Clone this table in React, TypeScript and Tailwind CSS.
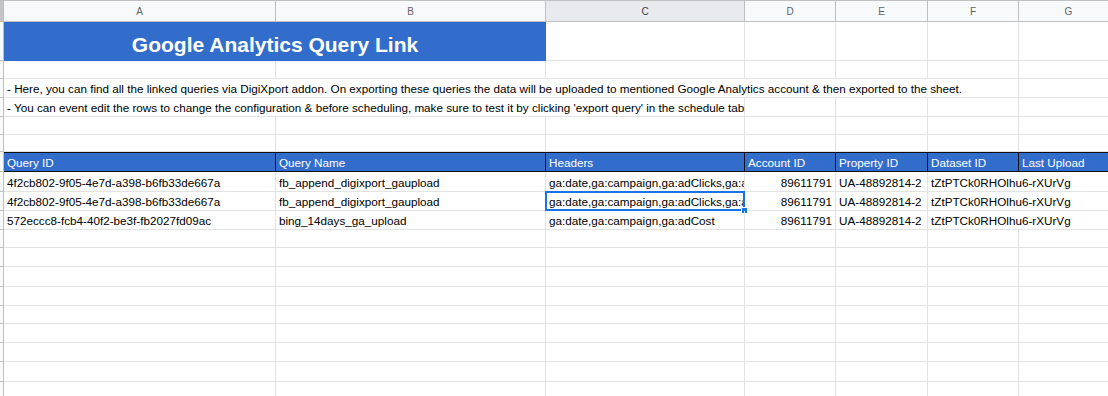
import React from "react";

const GRID = "border-[#e2e3e3]";

type CellProps = {
    w?: string;
    className?: string;
    children?: React.ReactNode;
};

function Cell({ w = "", className = "overflow-hidden", children }: CellProps) {
    return (
        <div className={`${w} shrink-0 h-full border-r border-b ${GRID} flex items-end px-[3px] pb-[1px] leading-[14px] whitespace-nowrap ${className}`}>
            {children}
        </div>
    );
}

function Row({ h, children }: { h: string; children: React.ReactNode }) {
    return (
        <div className={`flex ${h}`}>
            <div className="w-[4px] shrink-0 h-full bg-[#f8f9fa] border-r border-b border-[#c0c0c0]" />
            {children}
        </div>
    );
}

function BlankRow({ h }: { h: string }) {
    return (
        <Row h={h}>
            <Cell w="w-[272px]" />
            <Cell w="w-[270px]" />
            <Cell w="w-[199px]" />
            <Cell w="w-[91px]" />
            <Cell w="w-[92px]" />
            <Cell w="w-[91px]" />
            <Cell w="w-[100px]" />
        </Row>
    );
}

const rows = [
    {
        id: "4f2cb802-9f05-4e7d-a398-b6fb33de667a",
        name: "fb_append_digixport_gaupload",
        headers: "ga:date,ga:campaign,ga:adClicks,ga:adCost",
        h: "h-[20px]",
    },
    {
        id: "4f2cb802-9f05-4e7d-a398-b6fb33de667a",
        name: "fb_append_digixport_gaupload",
        headers: "ga:date,ga:campaign,ga:adClicks,ga:adCost",
        h: "h-[19px]",
        selected: true,
    },
    {
        id: "572eccc8-fcb4-40f2-be3f-fb2027fd09ac",
        name: "bing_14days_ga_upload",
        headers: "ga:date,ga:campaign,ga:adCost",
        h: "h-[19px]",
    },
];

export default function App() {
    const letters = [
        { l: "A", w: "w-[272px]" },
        { l: "B", w: "w-[270px]" },
        { l: "C", w: "w-[199px]", active: true },
        { l: "D", w: "w-[91px]" },
        { l: "E", w: "w-[92px]" },
        { l: "F", w: "w-[91px]" },
        { l: "G", w: "w-[100px]" },
    ];

    return (
        <div className="w-[1108px] h-[396px] overflow-hidden bg-white text-[11.7px] text-black" style={{ fontFamily: '"Liberation Sans", Arial, sans-serif' }}>
            {/* column letters */}
            <div className="flex h-[22px] border-t border-[#c0c0c0]">
                <div className="w-[4px] shrink-0 h-full bg-[#c4c4c4] border-r border-b border-[#bdbdbd]" />
                {letters.map((c) => (
                    <div
                        key={c.l}
                        className={`${c.w} shrink-0 h-full flex items-center justify-center border-r border-b border-[#c0c0c0] text-[10px] ${c.active ? "bg-[#e8eaed] text-[#3c4043]" : "bg-[#f8f9fa] text-[#5f6368]"}`}
                    >
                        {c.l}
                    </div>
                ))}
            </div>

            {/* title */}
            <Row h="h-[39px]">
                <div className="w-[542px] shrink-0 h-full bg-[#336dcc] flex items-end justify-center pb-[4px] text-white font-bold text-[21px] leading-[24px]">
                    Google Analytics Query Link
                </div>
                <Cell w="w-[199px]" />
                <Cell w="w-[91px]" />
                <Cell w="w-[92px]" />
                <Cell w="w-[91px]" />
                <Cell w="w-[100px]" />
            </Row>

            <BlankRow h="h-[18px]" />

            <Row h="h-[19px]">
                <Cell w="w-[1015px]" className="overflow-visible">
                    - Here, you can find all the linked queries via DigiXport addon. On exporting these queries the data will be uploaded to mentioned Google Analytics account &amp; then exported to the sheet.
                </Cell>
                <Cell w="w-[100px]" />
            </Row>
            <Row h="h-[19px]">
                <Cell w="w-[741px]" className="overflow-visible">
                    - You can event edit the rows to change the configuration &amp; before scheduling, make sure to test it by clicking 'export query' in the schedule tab
                </Cell>
                <Cell w="w-[91px]" />
                <Cell w="w-[92px]" />
                <Cell w="w-[91px]" />
                <Cell w="w-[100px]" />
            </Row>

            <BlankRow h="h-[18px]" />
            <BlankRow h="h-[17px]" />

            {/* table header */}
            <Row h="h-[20px]">
                {[
                    { t: "Query ID", w: "w-[272px]" },
                    { t: "Query Name", w: "w-[270px]" },
                    { t: "Headers", w: "w-[199px]" },
                    { t: "Account ID", w: "w-[91px]" },
                    { t: "Property ID", w: "w-[92px]" },
                    { t: "Dataset ID", w: "w-[91px]" },
                    { t: "Last Upload", w: "w-[100px]" },
                ].map((h) => (
                    <div
                        key={h.t}
                        className={`${h.w} shrink-0 h-full bg-[#336dcc] text-white border-t border-b border-r border-[#111] flex items-end px-[3px] pb-[1px] leading-[14px] whitespace-nowrap overflow-hidden`}
                    >
                        {h.t}
                    </div>
                ))}
            </Row>

            {rows.map((r, i) => (
                <Row key={i} h={r.h}>
                    <Cell w="w-[272px]">{r.id}</Cell>
                    <Cell w="w-[270px]">{r.name}</Cell>
                    <div className={`relative w-[199px] shrink-0 h-full border-r border-b ${GRID}`}>
                        <div className="h-full flex items-end px-[3px] pb-[1px] overflow-hidden whitespace-nowrap leading-[14px]">{r.headers}</div>
                        {r.selected && (
                            <>
                                <div className="absolute -left-[1px] -top-[1px] -right-[1px] -bottom-[1px] border-2 border-[#1a73e8]" />
                                <div className="absolute -right-[4px] -bottom-[4px] w-[7px] h-[7px] bg-[#1a73e8] border border-white" />
                            </>
                        )}
                    </div>
                    <Cell w="w-[91px]" className="justify-end overflow-hidden">89611791</Cell>
                    <Cell w="w-[92px]">UA-48892814-2</Cell>
                    <Cell w="w-[191px]">tZtPTCk0RHOlhu6-rXUrVg</Cell>
                </Row>
            ))}

            <BlankRow h="h-[18px]" />
            <BlankRow h="h-[19px]" />
            <BlankRow h="h-[20px]" />
            <BlankRow h="h-[19px]" />
            <BlankRow h="h-[18px]" />
            <BlankRow h="h-[19px]" />
            <BlankRow h="h-[19px]" />
            <BlankRow h="h-[20px]" />
            <BlankRow h="h-[19px]" />
        </div>
    );
}
